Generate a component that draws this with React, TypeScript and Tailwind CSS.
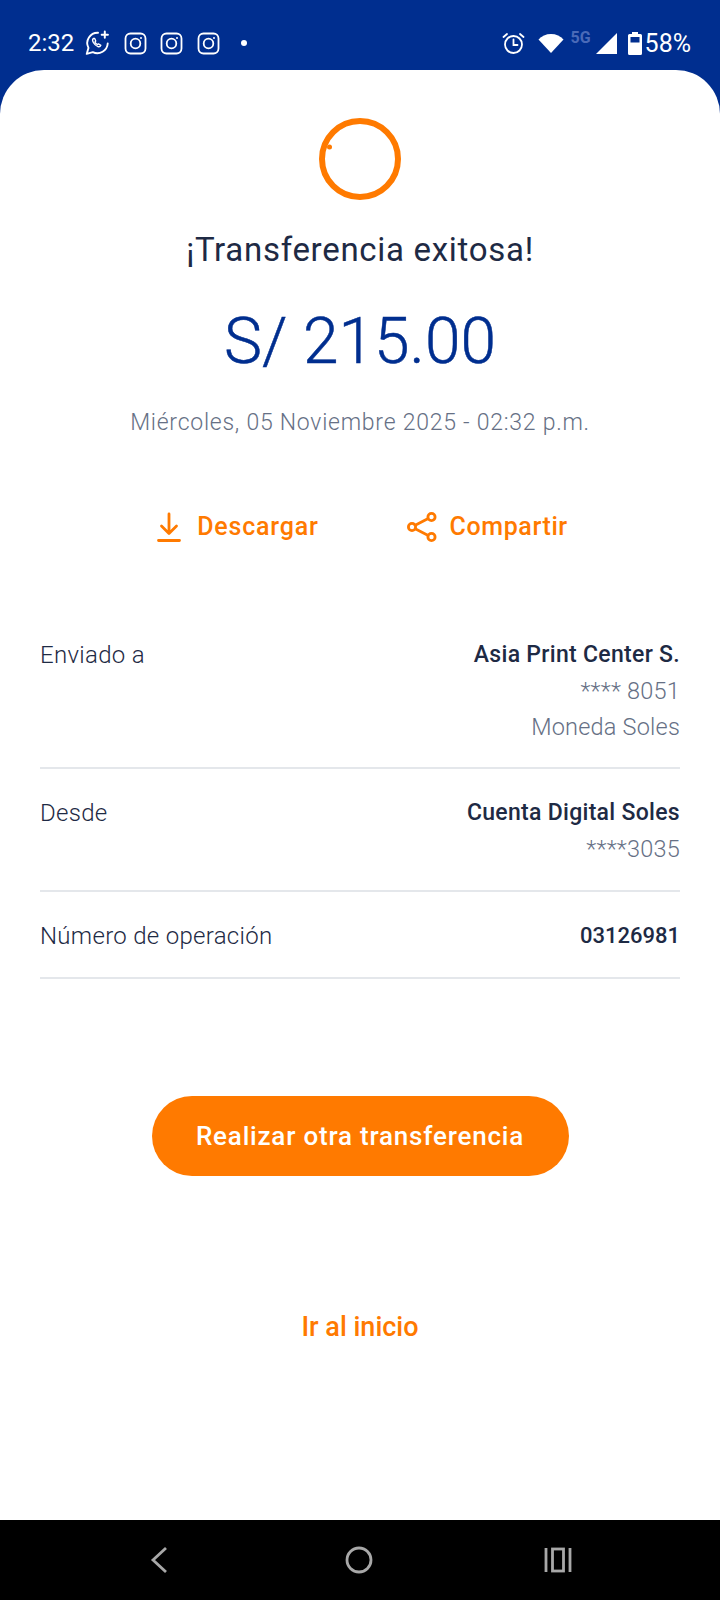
const font = { fontFamily: '"Roboto", "Noto Sans", sans-serif' }

function InstagramIcon() {
  return (
    <svg width="23" height="23" viewBox="0 0 23 23" fill="none" stroke="white" strokeWidth="1.8">
      <rect x="1.5" y="1.5" width="20" height="20" rx="5" />
      <circle cx="11.5" cy="11.5" r="4.8" />
      <circle cx="17" cy="6" r="1" fill="white" stroke="none" />
    </svg>
  )
}

function WhatsappIcon() {
  return (
    <svg width="26" height="26" viewBox="0 0 25 25" fill="none" stroke="white" strokeWidth="1.8" strokeLinecap="round" strokeLinejoin="round">
      <path d="M13.5 2.6A10 10 0 0 0 4.3 17.2L2.6 23l5.9-1.7A10 10 0 0 0 22.8 13" />
      <path d="M9 8.2c-1 .7-1 2 0 3.8 1.1 2 2.7 3.3 4.4 3.9 1.2.4 2.3 0 2.8-1.2l-2.3-1.4-1 .8c-1-.5-1.9-1.4-2.4-2.5l.8-1-1-2.5z" strokeWidth="1.3" />
      <path d="M20 1.5v6M17 4.5h6" strokeWidth="1.9" />
    </svg>
  )
}

function StatusBar() {
  return (
    <div className="flex h-[70px] shrink-0 items-start justify-between bg-[#002e8f] pt-[30px] pl-[28px] pr-[29px] text-white">
      <div className="flex items-center">
        <span className="mr-[10px] text-[24px] leading-[23px]">2:32</span>
        <div className="flex items-center gap-[13.5px]">
          <WhatsappIcon />
          <InstagramIcon />
          <InstagramIcon />
          <InstagramIcon />
        </div>
        <div className="ml-[21px] h-[6px] w-[6px] rounded-full bg-white" />
      </div>
      <div className="flex items-center">
        <svg width="23" height="23" viewBox="0 0 23 23" fill="none" stroke="white" strokeWidth="1.8" strokeLinecap="round">
          <circle cx="11.5" cy="12.5" r="8.5" />
          <path d="M11.5 7.5v5.5h4M1.5 5l3.5-3M21.5 5L18 2" />
        </svg>
        <svg className="ml-[13px]" width="26" height="20" viewBox="0 0 26 20">
          <path d="M0.5 6.5C3.5 3 8 1 13 1s9.5 2 12.5 5.5L13 20z" fill="white" />
        </svg>
        <span className="ml-[6px] mb-[10px] text-[16px] font-bold leading-[16px] text-[#4a6ab8]">5G</span>
        <svg className="ml-[5px]" width="21" height="21" viewBox="0 0 21 21">
          <path d="M21 0v21H0z" fill="white" />
        </svg>
        <svg className="ml-[11px]" width="14" height="23" viewBox="0 0 14 23">
          <path d="M4 0h6v2h2.5A1.5 1.5 0 0 1 14 3.5v18a1.5 1.5 0 0 1-1.5 1.5h-11A1.5 1.5 0 0 1 0 21.5v-18A1.5 1.5 0 0 1 1.5 2H4z" fill="white" />
          <rect x="2.5" y="5" width="9" height="5.5" fill="#002e8f" />
        </svg>
        <span className="ml-[3px] text-[25px] leading-[23px]">58%</span>
      </div>
    </div>
  )
}

function DetailRow({ label, children, className }: { label: string; children: React.ReactNode; className: string }) {
  return (
    <div className={`flex items-start justify-between border-b-2 border-[#e4e7eb] ${className}`}>
      <span className="text-[24px] leading-[36px] font-light tracking-[0.3px] text-[#1e2a44]">{label}</span>
      <div className="flex flex-col items-end leading-[36px]">{children}</div>
    </div>
  )
}

function Strong({ children, className = 'text-[23px] tracking-[0.3px]' }: { children: React.ReactNode; className?: string }) {
  return <span className={`font-medium text-[#1e2a44] ${className}`}>{children}</span>
}

function Muted({ children }: { children: React.ReactNode }) {
  return <span className="text-[23.5px] font-light tracking-[0.2px] text-[#667085]">{children}</span>
}

export default function App() {
  return (
    <div className="flex h-[1600px] w-[720px] flex-col overflow-hidden bg-[#002e8f]" style={font}>
      <StatusBar />
      <main className="flex flex-1 flex-col items-center rounded-t-[44px] bg-white pt-[48px]">
        <svg width="82" height="82" viewBox="0 0 82 82" fill="none">
          <circle cx="41" cy="41" r="38" stroke="#ff7a00" strokeWidth="6" />
          <circle cx="10.5" cy="29" r="2.5" fill="#ff7a00" />
        </svg>
        <h1 className="mt-[28px] text-[33px] leading-[44px] font-normal tracking-[0.7px] text-[#1e2a44]">¡Transferencia exitosa!</h1>
        <div className="mt-[30px] text-[64px] leading-[80px] font-light text-[#002e8f] [-webkit-text-stroke:0.5px_#002e8f]">S/ 215.00</div>
        <div className="mt-[25px] text-[23px] leading-[32px] font-light tracking-[0.75px] text-[#667085]">
          Miércoles, 05 Noviembre 2025 - 02:32 p.m.
        </div>
        <div className="mt-[64px] flex h-[48px] items-center pl-[5px] text-[#ff7a00]">
          <button className="flex items-center gap-[16px] text-[25px] font-medium tracking-[0.8px]">
            <svg width="24" height="30" viewBox="0 0 24 30" fill="none" stroke="#ff7a00" strokeWidth="2.8" strokeLinecap="round" strokeLinejoin="round">
              <path d="M12 2v19M4.5 14l7.5 7.5 7.500-7.500M1.500 28.500h21" />
            </svg>
            Descargar
          </button>
          <button className="ml-[88px] flex items-center gap-[13px] text-[25px] font-medium tracking-[0.6px]">
            <svg width="30" height="30" viewBox="0 0 30 30" fill="none" stroke="#ff7a00" strokeWidth="2.8">
              <circle cx="24.5" cy="5" r="3.6" />
              <circle cx="5" cy="15" r="3.6" />
              <circle cx="24.5" cy="25" r="3.6" />
              <path d="M8.2 13.3l13-6.7M8.2 16.7l13 6.7" />
            </svg>
            Compartir
          </button>
        </div>
        <section className="mt-[86px] w-full px-[40px]">
          <DetailRow label="Enviado a" className="pb-[22px]">
            <Strong>Asia Print Center S.</Strong>
            <Muted>**** 8051</Muted>
            <Muted>Moneda Soles</Muted>
          </DetailRow>
          <DetailRow label="Desde" className="pt-[26px] pb-[23px]">
            <Strong>Cuenta Digital Soles</Strong>
            <Muted>****3035</Muted>
          </DetailRow>
          <DetailRow label="Número de operación" className="pt-[26px] pb-[23px]">
            <Strong className="text-[22px]">03126981</Strong>
          </DetailRow>
        </section>
        <button className="mt-[117px] h-[80px] w-[417px] rounded-full bg-[#ff7a00] text-[26px] font-medium tracking-[0.8px] text-white">
          Realizar otra transferencia
        </button>
        <button className="mt-[131px] text-[27px] leading-[40px] font-medium text-[#ff7a00]">Ir al inicio</button>
      </main>
      <nav className="flex h-[80px] shrink-0 items-center justify-center bg-black">
        <svg width="24" height="30" viewBox="0 0 24 30" fill="none" stroke="#a8a8a8" strokeWidth="2.8">
          <path d="M19 3L6 15l13 12" />
        </svg>
        <svg className="ml-[173px]" width="30" height="30" viewBox="0 0 30 30" fill="none" stroke="#a8a8a8" strokeWidth="2.8">
          <circle cx="15" cy="15" r="12" />
        </svg>
        <svg className="ml-[169px]" width="30" height="30" viewBox="0 0 30 30" fill="none" stroke="#a8a8a8" strokeWidth="2.8">
          <path d="M3 3v24M27 3v24" />
          <rect x="9.5" y="4" width="11" height="22" />
        </svg>
      </nav>
    </div>
  )
}
